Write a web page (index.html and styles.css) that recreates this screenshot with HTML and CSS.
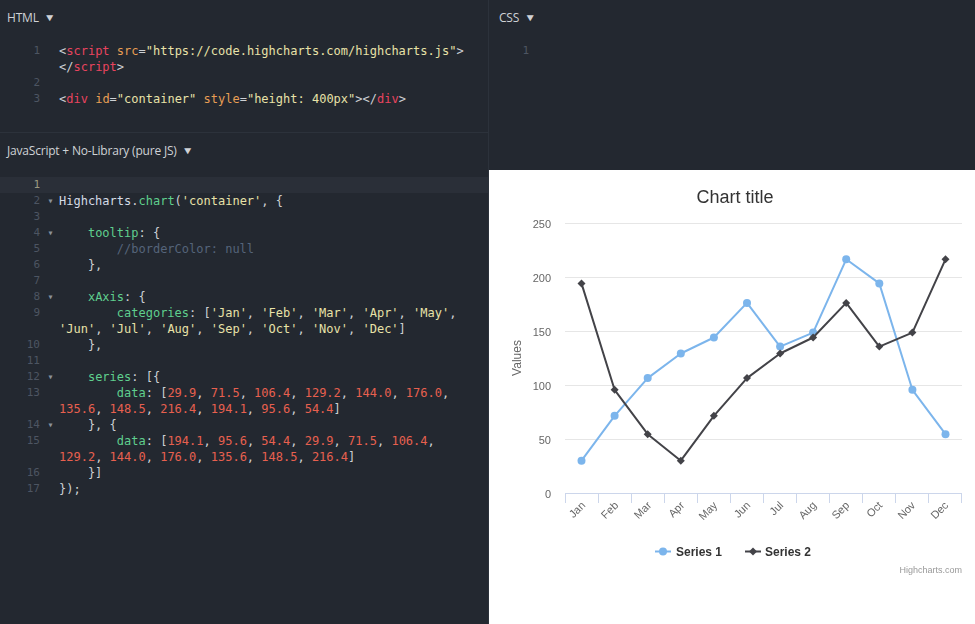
FILE: index.html
```html
<!DOCTYPE html>
<html>
<head>
<meta charset="utf-8">
<link rel="stylesheet" href="styles.css">
</head>
<body>
<div class="app">
  <div class="left">
    <section class="panel html-panel">
      <div class="panel-head">HTML <span class="caret">▼</span></div>
      <div class="code">
        <div class="row"><span class="num">1</span><span class="fold"></span><span class="src"><span class="p">&lt;</span><span class="tag">script</span> <span class="attr">src</span><span class="p">=</span><span class="str">"https://code.highcharts.com/highcharts.js"</span><span class="p">&gt;</span><br><span class="p">&lt;/</span><span class="tag">script</span><span class="p">&gt;</span></span></div>
        <div class="row"><span class="num">2</span><span class="fold"></span><span class="src"> </span></div>
        <div class="row"><span class="num">3</span><span class="fold"></span><span class="src"><span class="p">&lt;</span><span class="tag">div</span> <span class="attr">id</span><span class="p">=</span><span class="str">"container"</span> <span class="attr">style</span><span class="p">=</span><span class="str">"height: 400px"</span><span class="p">&gt;&lt;/</span><span class="tag">div</span><span class="p">&gt;</span></span></div>
      </div>
    </section>
    <section class="panel js-panel">
      <div class="panel-head">JavaScript + No-Library (pure JS) <span class="caret">▼</span></div>
      <div class="code">
        <div class="row active"><span class="num">1</span><span class="fold"></span><span class="src"> </span></div>
        <div class="row"><span class="num">2</span><span class="fold">▾</span><span class="src"><span class="id">Highcharts</span><span class="p">.</span><span class="fn">chart</span><span class="p">(</span><span class="str">'container'</span><span class="p">, {</span></span></div>
        <div class="row"><span class="num">3</span><span class="fold"></span><span class="src"> </span></div>
        <div class="row"><span class="num">4</span><span class="fold">▾</span><span class="src">    <span class="key">tooltip</span><span class="p">: {</span></span></div>
        <div class="row"><span class="num">5</span><span class="fold"></span><span class="src">        <span class="cm">//borderColor: null</span></span></div>
        <div class="row"><span class="num">6</span><span class="fold"></span><span class="src"><span class="p">    },</span></span></div>
        <div class="row"><span class="num">7</span><span class="fold"></span><span class="src"> </span></div>
        <div class="row"><span class="num">8</span><span class="fold">▾</span><span class="src">    <span class="key">xAxis</span><span class="p">: {</span></span></div>
        <div class="row"><span class="num">9</span><span class="fold"></span><span class="src">        <span class="key">categories</span><span class="p">: [</span><span class="str">'Jan'</span><span class="p">, </span><span class="str">'Feb'</span><span class="p">, </span><span class="str">'Mar'</span><span class="p">, </span><span class="str">'Apr'</span><span class="p">, </span><span class="str">'May'</span><span class="p">,</span><br><span class="str">'Jun'</span><span class="p">, </span><span class="str">'Jul'</span><span class="p">, </span><span class="str">'Aug'</span><span class="p">, </span><span class="str">'Sep'</span><span class="p">, </span><span class="str">'Oct'</span><span class="p">, </span><span class="str">'Nov'</span><span class="p">, </span><span class="str">'Dec'</span><span class="p">]</span></span></div>
        <div class="row"><span class="num">10</span><span class="fold"></span><span class="src"><span class="p">    },</span></span></div>
        <div class="row"><span class="num">11</span><span class="fold"></span><span class="src"> </span></div>
        <div class="row"><span class="num">12</span><span class="fold">▾</span><span class="src">    <span class="key">series</span><span class="p">: [{</span></span></div>
        <div class="row"><span class="num">13</span><span class="fold"></span><span class="src">        <span class="key">data</span><span class="p">: [</span><span class="nm">29.9</span><span class="p">, </span><span class="nm">71.5</span><span class="p">, </span><span class="nm">106.4</span><span class="p">, </span><span class="nm">129.2</span><span class="p">, </span><span class="nm">144.0</span><span class="p">, </span><span class="nm">176.0</span><span class="p">,</span><br><span class="nm">135.6</span><span class="p">, </span><span class="nm">148.5</span><span class="p">, </span><span class="nm">216.4</span><span class="p">, </span><span class="nm">194.1</span><span class="p">, </span><span class="nm">95.6</span><span class="p">, </span><span class="nm">54.4</span><span class="p">]</span></span></div>
        <div class="row"><span class="num">14</span><span class="fold">▾</span><span class="src"><span class="p">    }, {</span></span></div>
        <div class="row"><span class="num">15</span><span class="fold"></span><span class="src">        <span class="key">data</span><span class="p">: [</span><span class="nm">194.1</span><span class="p">, </span><span class="nm">95.6</span><span class="p">, </span><span class="nm">54.4</span><span class="p">, </span><span class="nm">29.9</span><span class="p">, </span><span class="nm">71.5</span><span class="p">, </span><span class="nm">106.4</span><span class="p">,</span><br><span class="nm">129.2</span><span class="p">, </span><span class="nm">144.0</span><span class="p">, </span><span class="nm">176.0</span><span class="p">, </span><span class="nm">135.6</span><span class="p">, </span><span class="nm">148.5</span><span class="p">, </span><span class="nm">216.4</span><span class="p">]</span></span></div>
        <div class="row"><span class="num">16</span><span class="fold"></span><span class="src"><span class="p">    }]</span></span></div>
        <div class="row"><span class="num">17</span><span class="fold"></span><span class="src"><span class="p">});</span></span></div>
      </div>
    </section>
  </div>
  <div class="right">
    <section class="panel css-panel">
      <div class="panel-head">CSS <span class="caret">▼</span></div>
      <div class="code">
        <div class="row"><span class="num">1</span><span class="fold"></span><span class="src"> </span></div>
      </div>
    </section>
    <section class="result">
      <svg class="chart" width="486" height="454" viewBox="489 170 486 454" xmlns="http://www.w3.org/2000/svg">
        <rect x="489" y="170" width="486" height="454" fill="#ffffff"/>
        <text x="735" y="203" class="c-title" text-anchor="middle">Chart title</text>
        <g stroke="#e6e6e6" stroke-width="1">
          <line x1="565" y1="223.5" x2="962" y2="223.5"/>
          <line x1="565" y1="277.5" x2="962" y2="277.5"/>
          <line x1="565" y1="331.5" x2="962" y2="331.5"/>
          <line x1="565" y1="385.5" x2="962" y2="385.5"/>
          <line x1="565" y1="439.5" x2="962" y2="439.5"/>
        </g>
        <g stroke="#ccd6eb" stroke-width="1">
          <line x1="565" y1="493.5" x2="962" y2="493.5"/>
          <line x1="565.5" y1="493" x2="565.5" y2="503"/>
          <line x1="598.5" y1="493" x2="598.5" y2="503"/>
          <line x1="631.5" y1="493" x2="631.5" y2="503"/>
          <line x1="664.5" y1="493" x2="664.5" y2="503"/>
          <line x1="697.5" y1="493" x2="697.5" y2="503"/>
          <line x1="730.5" y1="493" x2="730.5" y2="503"/>
          <line x1="763.5" y1="493" x2="763.5" y2="503"/>
          <line x1="796.5" y1="493" x2="796.5" y2="503"/>
          <line x1="829.5" y1="493" x2="829.5" y2="503"/>
          <line x1="862.5" y1="493" x2="862.5" y2="503"/>
          <line x1="895.5" y1="493" x2="895.5" y2="503"/>
          <line x1="928.5" y1="493" x2="928.5" y2="503"/>
          <line x1="961.5" y1="493" x2="961.5" y2="503"/>
        </g>
        <g class="c-label" text-anchor="end">
          <text x="551" y="228">250</text>
          <text x="551" y="282">200</text>
          <text x="551" y="336">150</text>
          <text x="551" y="390">100</text>
          <text x="551" y="444">50</text>
          <text x="551" y="498">0</text>
        </g>
        <text class="c-axis" text-anchor="middle" transform="translate(521 358) rotate(-90)">Values</text>
        <g class="c-label" text-anchor="end">
          <text transform="translate(586 506) rotate(-45)">Jan</text>
          <text transform="translate(619 506) rotate(-45)">Feb</text>
          <text transform="translate(652 506) rotate(-45)">Mar</text>
          <text transform="translate(685 506) rotate(-45)">Apr</text>
          <text transform="translate(718 506) rotate(-45)">May</text>
          <text transform="translate(751 506) rotate(-45)">Jun</text>
          <text transform="translate(784 506) rotate(-45)">Jul</text>
          <text transform="translate(817 506) rotate(-45)">Aug</text>
          <text transform="translate(850 506) rotate(-45)">Sep</text>
          <text transform="translate(883 506) rotate(-45)">Oct</text>
          <text transform="translate(916 506) rotate(-45)">Nov</text>
          <text transform="translate(949 506) rotate(-45)">Dec</text>
        </g>
        <polyline fill="none" stroke="#7cb5ec" stroke-width="2" stroke-linejoin="round" points="581.5,460.7 614.6,415.8 647.7,378.1 680.8,353.5 713.9,337.5 747,302.9 780.1,346.6 813.1,332.6 846.2,259.3 879.3,283.4 912.4,389.8 945.5,434.2"/>
        <g fill="#7cb5ec">
          <circle cx="581.5" cy="460.7" r="4"/>
          <circle cx="614.6" cy="415.8" r="4"/>
          <circle cx="647.7" cy="378.1" r="4"/>
          <circle cx="680.8" cy="353.5" r="4"/>
          <circle cx="713.9" cy="337.5" r="4"/>
          <circle cx="747" cy="302.9" r="4"/>
          <circle cx="780.1" cy="346.6" r="4"/>
          <circle cx="813.1" cy="332.6" r="4"/>
          <circle cx="846.2" cy="259.3" r="4"/>
          <circle cx="879.3" cy="283.4" r="4"/>
          <circle cx="912.4" cy="389.8" r="4"/>
          <circle cx="945.5" cy="434.2" r="4"/>
        </g>
        <polyline fill="none" stroke="#434348" stroke-width="2" stroke-linejoin="round" points="581.5,283.4 614.6,389.8 647.7,434.2 680.8,460.7 713.9,415.8 747,378.1 780.1,353.5 813.1,337.5 846.2,302.9 879.3,346.6 912.4,332.6 945.5,259.3"/>
        <g fill="#434348">
          <path d="M581.5 279.4 L585.5 283.4 L581.5 287.4 L577.5 283.4 Z"/>
          <path d="M614.6 385.8 L618.6 389.8 L614.6 393.8 L610.6 389.8 Z"/>
          <path d="M647.7 430.2 L651.7 434.2 L647.7 438.2 L643.7 434.2 Z"/>
          <path d="M680.8 456.7 L684.8 460.7 L680.8 464.7 L676.8 460.7 Z"/>
          <path d="M713.9 411.8 L717.9 415.8 L713.9 419.8 L709.9 415.8 Z"/>
          <path d="M747 374.1 L751 378.1 L747 382.1 L743 378.1 Z"/>
          <path d="M780.1 349.5 L784.1 353.5 L780.1 357.5 L776.1 353.5 Z"/>
          <path d="M813.1 333.5 L817.1 337.5 L813.1 341.5 L809.1 337.5 Z"/>
          <path d="M846.2 298.9 L850.2 302.9 L846.2 306.9 L842.2 302.9 Z"/>
          <path d="M879.3 342.6 L883.3 346.6 L879.3 350.6 L875.3 346.6 Z"/>
          <path d="M912.4 328.6 L916.4 332.6 L912.4 336.6 L908.4 332.6 Z"/>
          <path d="M945.5 255.3 L949.5 259.3 L945.5 263.3 L941.5 259.3 Z"/>
        </g>
        <line x1="655" y1="551.5" x2="671" y2="551.5" stroke="#7cb5ec" stroke-width="2"/>
        <circle cx="663" cy="551.5" r="4" fill="#7cb5ec"/>
        <text x="676" y="556" class="c-legend">Series 1</text>
        <line x1="745" y1="551.5" x2="761" y2="551.5" stroke="#434348" stroke-width="2"/>
        <path d="M753 547.5 L757 551.5 L753 555.5 L749 551.5 Z" fill="#434348"/>
        <text x="765" y="556" class="c-legend">Series 2</text>
        <text x="962" y="573" class="c-credit" text-anchor="end">Highcharts.com</text>
      </svg>
    </section>
  </div>
</div>
</body>
</html>
```
FILE: styles.css
```css
html, body {
  margin: 0;
  padding: 0;
  background: #232830;
  overflow: hidden;
}

.app {
  display: grid;
  grid-template-columns: 488px 1px 486px;
  width: 975px;
  height: 624px;
  background: #2c323b;
  column-gap: 0;
}

.left {
  grid-column: 1;
  display: flex;
  flex-direction: column;
  row-gap: 1px;
  height: 624px;
}

.right {
  grid-column: 3;
  display: flex;
  flex-direction: column;
  height: 624px;
}

.panel {
  background: #232830;
}

.html-panel {
  height: 132px;
  flex: none;
}

.js-panel {
  flex: 1;
}

.css-panel {
  height: 170px;
  flex: none;
}

.panel-head {
  height: 34px;
  display: flex;
  align-items: center;
  padding-left: 7px;
  font-family: "Open Sans", "Noto Sans", sans-serif;
  font-size: 12px;
  color: #cfd2d6;
  letter-spacing: -0.2px;
}

.css-panel .panel-head {
  padding-left: 10px;
}

.caret {
  font-size: 12px;
  margin-left: 5px;
  color: #cfd2d6;
  transform: scaleY(0.85);
}

.code {
  padding-top: 9px;
  font-family: "DejaVu Sans Mono", monospace;
  font-size: 12px;
  line-height: 16px;
}

.js-panel .code {
  padding-top: 10px;
}

.row {
  display: grid;
  grid-template-columns: 40px 19px 1fr;
  align-items: start;
}

.row.active {
  background: #2a2f38;
}

.num {
  text-align: right;
  font-size: 11px;
  color: #4d5562;
}

.row.active .num {
  color: #9c9a82;
}

.fold {
  font-size: 10px;
  color: #8a919b;
  text-align: center;
  padding-left: 2px;
}

.src {
  white-space: pre;
  color: #d4d7dc;
}

.p { color: #cdd0d4; }
.tag { color: #e8445f; }
.attr { color: #e79e54; }
.str { color: #e8e2a8; }
.id { color: #d4dbe6; }
.fn { color: #5fcf8e; }
.key { color: #5fcf8e; }
.cm { color: #55647a; }
.nm { color: #e8604f; }

.result {
  flex: 1;
  background: #ffffff;
  margin-left: 0;
}

.chart {
  display: block;
  font-family: "Liberation Sans", Arial, sans-serif;
  will-change: transform;
}

.c-title {
  font-size: 18px;
  fill: #333333;
}

.c-label {
  font-size: 11px;
  fill: #666666;
}

.c-axis {
  font-size: 12px;
  fill: #666666;
}

.c-legend {
  font-size: 12px;
  font-weight: bold;
  fill: #333333;
}

.c-credit {
  font-size: 9px;
  fill: #999999;
}
```
